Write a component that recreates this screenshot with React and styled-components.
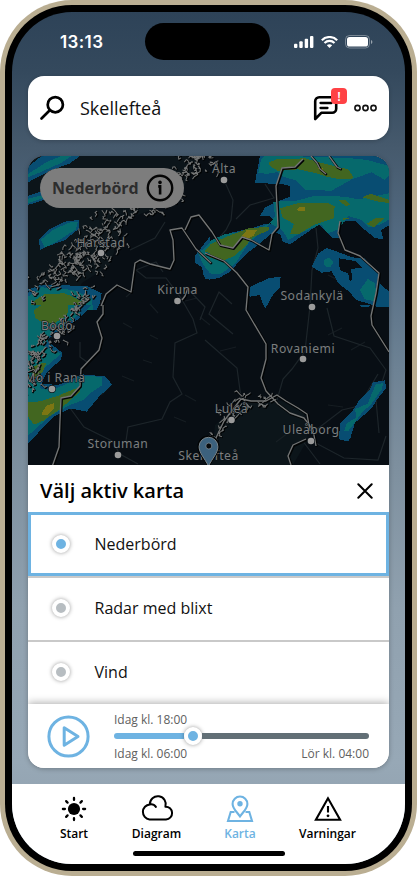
import React from "react";
import styled, { createGlobalStyle, css } from "styled-components";

const Global = createGlobalStyle`
  * { box-sizing: border-box; }
  body { margin: 0; background: #fff; font-family: "Open Sans", "Noto Sans", sans-serif; color: #111; }
  button { font: inherit; color: inherit; background: none; border: 0; padding: 0; }
  svg { display: block; }
`;

const Phone = styled.div`
  width: 417px;
  height: 876px;
  padding: 5px;
  border-radius: 72px;
  background: #baae92;
  overflow: hidden;
`;
const Bezel = styled.div`
  height: 100%;
  padding: 7px;
  border-radius: 67px;
  background: #000;
`;
const Screen = styled.div`
  height: 100%;
  display: flex;
  flex-direction: column;
  border-radius: 60px;
  overflow: hidden;
  background: linear-gradient(#2e4358 0%, #34495d 7%, #465a6d 16%, #536b82 27%, #6d8294 42%, #7d8f9e 53%, #90a1af 70%, #97a8b6 88%, #8d9daa 100%);
`;
const StatusBar = styled.header`
  flex: none;
  height: 64px;
  display: grid;
  grid-template-columns: 133px 125px 135px;
  padding-top: 11px;
`;
const Clock = styled.time`
  padding-left: 48px;
  font: 600 17px/38px Inter, sans-serif;
  letter-spacing: 0.4px;
  color: #fff;
`;
const Island = styled.div`
  height: 37px;
  border-radius: 19px;
  background: #000;
`;
const StatusIcons = styled.div`
  display: flex;
  align-items: center;
  gap: 7px;
  height: 37px;
  padding-left: 24px;
`;
const SearchBar = styled.div`
  flex: none;
  height: 64px;
  margin: 0 16px;
  padding: 0 12px 0 11px;
  display: flex;
  align-items: center;
  border-radius: 16px;
  background: #fff;
  box-shadow: 0 1px 4px #0003;
`;
const Place = styled.span`
  flex: 1;
  margin-left: 15px;
  font-size: 18px;
  line-height: 24px;
`;
const MessageButton = styled.button`
  position: relative;
  margin-right: 15px;
`;
const Badge = styled.span`
  position: absolute;
  top: -7px;
  right: -8px;
  width: 16px;
  height: 16px;
  border-radius: 4px;
  background: #ff4245;
  color: #fff;
  font-size: 13px;
  font-weight: 600;
  line-height: 16px;
  text-align: center;
`;
const Card = styled.main`
  flex: none;
  height: 612px;
  margin: 16px 16px;
  display: flex;
  flex-direction: column;
  border-radius: 16px;
  overflow: hidden;
  background: #fff;
  box-shadow: 0 1px 5px #0004;
`;
const MapArea = styled.div`
  flex: none;
  position: relative;
  height: 309px;
`;
const LayerPill = styled.button`
  position: absolute;
  left: 12px;
  top: 12px;
  display: flex;
  align-items: center;
  justify-content: space-between;
  width: 144px;
  height: 40px;
  padding: 0 10px 0 12px;
  border-radius: 20px;
  background: #7d7d7d;
  color: #2d2d2d;
  font-size: 16px;
  font-weight: 700;
`;
const SheetHeader = styled.div`
  flex: none;
  display: flex;
  align-items: center;
  justify-content: space-between;
  height: 47px;
  padding: 4px 16px 0 12px;
`;
const SheetTitle = styled.h2`
  margin: 0;
  font-size: 20px;
  font-weight: 600;
  line-height: 28px;
  color: #000;
`;
const Option = styled.div`
  flex: none;
  display: flex;
  align-items: center;
  height: 64px;
  padding: 0 20px;
  border-bottom: ${(p) => (p.$last ? 0 : 2)}px solid #c9c9c9;
  font-size: 16px;
  ${(p) =>
    p.$active &&
    css`
      border: 3px solid #6eb3e2;
      padding: 0 17px;
    `}
  ${(p) => p.$middle && css`border-top: 2px solid #c9c9c9; height: 66px; padding-bottom: 2px;`}
  ${(p) => p.$last && css`height: 62px; padding-bottom: 2px;`}
`;
const OptionLabel = styled.span`
  margin-left: 20.5px;
`;
const Knob = styled.span`
  flex: none;
  width: ${(p) => p.$size || 18}px;
  height: ${(p) => p.$size || 18}px;
  margin: ${(p) => (p.$size ? 0 : "0 4px")};
  border: 4px solid #fff;
  border-radius: 50%;
  background: ${(p) => (p.$on ? "#6eb3e2" : "#b7bdc1")};
  box-shadow: 0 0 4px #0006;
`;
const Player = styled.div`
  flex: none;
  display: flex;
  align-items: center;
  height: 64px;
  padding: 0 20px 0 19px;
  background: #fff;
  box-shadow: 0 -1px 8px #0005;
`;
const Timeline = styled.div`
  flex: 1;
  margin-left: 24px;
  display: flex;
  flex-direction: column;
  font-size: 12px;
  line-height: 16px;
  color: #606060;
`;
const CurrentTime = styled.span`
  padding-top: 2px;
`;
const Track = styled.div`
  display: flex;
  align-items: center;
  height: 16px;
`;
const Played = styled.div`
  width: 70px;
  height: 6px;
  border-radius: 3px 0 0 3px;
  background: #6eb3e2;
`;
const Remaining = styled.div`
  flex: 1;
  height: 6px;
  border-radius: 0 3px 3px 0;
  background: #626f76;
`;
const TimeRange = styled.div`
  display: flex;
  justify-content: space-between;
  padding-top: 2px;
`;
const Footer = styled.footer`
  flex: none;
  height: 80px;
  background: #fff;
`;
const Nav = styled.nav`
  display: grid;
  grid-template-columns: 74px 91px 76px 99px;
  justify-content: start;
  height: 67px;
  padding: 10px 0 0 25px;
`;
const NavItem = styled.button`
  display: flex;
  flex-direction: column;
  align-items: center;
  gap: 1px;
  font-size: 12px;
  font-weight: 600;
  line-height: 18px;
  color: ${(p) => (p.$active ? "#6eb3e2" : "#000")};
`;
const HomeIndicator = styled.div`
  width: 152px;
  height: 5px;
  margin: 0 auto;
  border-radius: 3px;
  background: #000;
`;

const SearchIcon = () => (
  <svg width="26" height="26" viewBox="0 0 26 26" fill="none" stroke="#000" strokeWidth="2.7" strokeLinecap="round">
    <circle cx="16.3" cy="9.7" r="7.6" /><path d="M10.8 15.2 2.5 23.5" />
  </svg>
);
const MessageIcon = () => (
  <svg width="26" height="26" viewBox="0 0 26 26" fill="none" stroke="#000" strokeWidth="2.6" strokeLinecap="round" strokeLinejoin="round">
    <path d="M2.2 24V6.2a4 4 0 0 1 4-4h17v11.6a4 4 0 0 1-4 4H8.3z" /><path d="M7.5 8h11M7.5 13h7" strokeWidth="2.3" />
  </svg>
);
const MoreIcon = () => (
  <svg width="23" height="8" viewBox="0 0 23 8" fill="none" stroke="#111" strokeWidth="1.6">
    {[3.5, 11.5, 19.5].map((x) => <circle key={x} cx={x} cy="4" r="2.6" />)}
  </svg>
);
const Signal = () => (
  <svg width="20" height="12" fill="#fff">
    <rect y="7.8" width="3.4" height="4.2" rx="1" /><rect x="5.3" y="5.2" width="3.4" height="6.8" rx="1" />
    <rect x="10.7" y="2.7" width="3.4" height="9.3" rx="1" /><rect x="16" width="3.4" height="12" rx="1" />
  </svg>
);
const Wifi = () => (
  <svg width="17" height="12" viewBox="0 0 17 12" fill="none" stroke="#fff" strokeWidth="2.1">
    <path d="M.8 4.2C5-.1 12-.1 16.2 4.2M3.5 7c2.8-2.9 7.2-2.9 10 0" /><path d="m8.5 12-2.7-2.8c1.5-1.4 3.9-1.4 5.4 0z" fill="#fff" stroke="none" />
  </svg>
);
const Battery = () => (
  <svg width="28" height="14" viewBox="0 0 28 14">
    <rect x=".5" y=".5" width="24" height="12.5" rx="4" fill="none" stroke="#fff" opacity=".35" />
    <rect x="2" y="2" width="21" height="9.5" rx="2.6" fill="#fff" /><path d="M26 5v4q1.4-.7 1.4-2T26 5" fill="#fff" opacity=".5" />
  </svg>
);
const InfoIcon = () => (
  <svg width="28" height="28" viewBox="0 0 28 28" fill="none" stroke="#050505">
    <circle cx="14" cy="14" r="12.2" strokeWidth="2.4" /><path d="M12.2 12.4h1.9v8" strokeWidth="2.6" /><circle cx="14" cy="8.4" r="1.8" fill="#050505" stroke="none" />
  </svg>
);
const CloseIcon = () => (
  <svg width="16" height="16" stroke="#000" strokeWidth="2" strokeLinecap="round"><path d="m1.3 1.3 13.4 13.4m0-13.4L1.3 14.7" /></svg>
);
const PlayIcon = () => (
  <svg width="43" height="43" viewBox="0 0 43 43" fill="none" stroke="#6eb3e2" strokeWidth="3" strokeLinejoin="round">
    <circle cx="21.5" cy="21.5" r="19.6" /><path d="M17.2 12.8v17.4L31 21.5z" />
  </svg>
);
const SunIcon = () => (
  <svg width="30" height="30" viewBox="-15 -15 30 30" stroke="#000" strokeWidth="2.3" strokeLinecap="round">
    <circle r="6.1" stroke="none" />
    {[0, 45, 90, 135, 180, 225, 270, 315].map((a) => <path key={a} d="M0-9.1v-2" transform={`rotate(${a})`} />)}
  </svg>
);
const CloudIcon = () => (
  <svg width="34" height="30" viewBox="0 0 34 30" fill="none" stroke="#000" strokeWidth="2" strokeLinecap="round" strokeLinejoin="round">
    <path d="M9.8 10.4a7.6 7.6 0 0 0-.3 15.1H26a6.4 6.4 0 0 0-.6-12.8 8 8 0 1 0-15.6-2.3c2.8-.5 4.8.5 6.1 2.5" />
  </svg>
);
const MapIcon = () => (
  <svg width="30" height="30" viewBox="0 0 30 30" fill="none" stroke="currentColor" strokeWidth="2.1">
    <path d="M15 22.5C11.6 17.5 7.6 14.4 7.6 9.9a7.4 7.4 0 0 1 14.8 0c0 4.5-4 7.6-7.4 12.6z" /><circle cx="15" cy="9.8" r="2.7" fill="currentColor" stroke="none" /><path d="M9.5 18H5.7L3 27h24l-2.7-9h-3.8" />
  </svg>
);
const WarningIcon = () => (
  <svg width="30" height="30" viewBox="0 0 30 30" fill="none" stroke="#000" strokeWidth="2.1"><path d="M15 4.3 2.9 25.8h24.2z" /><path d="M15 12v6.5" /><circle cx="15" cy="21.8" r="1.4" fill="#000" stroke="none" /></svg>
);

const blue = "#084d72";
const teal = "#06696c";
const green = "#426620";
const yellow = "#7d7613";

// Small deterministic generator for the broken shapes of the archipelago.
const skerries = (points, count, spread, seed) => {
  let s = seed;
  const rand = () => ((s = (s * 16807) % 2147483647) / 2147483647) - 0.5;
  let d = "";
  for (let i = 0; i < count; i++) {
    const t = (i / count) * (points.length - 1);
    const k = Math.floor(t);
    const a = points[k];
    const b = points[k + 1];
    const x = a[0] + (b[0] - a[0]) * (t - k) + rand() * spread;
    const y = a[1] + (b[1] - a[1]) * (t - k) + rand() * spread;
    d += `M${x.toFixed(1)} ${y.toFixed(1)}l${(rand() * 6).toFixed(1)} ${(rand() * 6).toFixed(1)} ${(rand() * 7).toFixed(1)} ${(rand() * 7).toFixed(1)} ${(rand() * 5).toFixed(1)} ${(rand() * 6).toFixed(1)}`;
  }
  return d;
};
const fjords = [
  skerries([[30, 292], [65, 270], [90, 236], [122, 212], [165, 200], [185, 167], [212, 160]], 250, 23, 71),
  skerries([[64, 266], [90, 262], [124, 240]], 65, 22, 19),
  skerries([[30, 390], [38, 352], [62, 325], [90, 290]], 110, 17, 37),
];
const gulf = skerries([[211, 444], [226, 414], [242, 400], [272, 402]], 46, 13, 88);

const cities = [
  ["Alta", 224, 173, 180], ["Harstad", 101, 247, 253], ["Kiruna", 177.5, 294, 301],
  ["Sodankylä", 312, 300, 307], ["Bodö", 57, 330, 336], ["Rovaniemi", 303, 353, 359],
  ["Mo i Rana", 54.8, 382, 389], ["Luleå", 231.5, 413, 420], ["Uleåborg", 311, 434, 441],
  ["Storuman", 118, 448, 455], ["Skellefteå", 208.5, 460, null],
];

const WeatherMap = () => (
  <svg width="361" height="309" viewBox="28 156 361 309">
    <rect x="28" y="156" width="361" height="309" fill="#080e14" />
    <path d="M28 156h170l-20 44-54 20-14 45-28 18-18 38-36 55zM211 465l4-40 25-22 42-2 22 12 4 26-15 26z" fill="#0c151a" />
    {/* Rivers and roads */}
    <g fill="none" stroke="#1d252a" strokeWidth="1.2">
      <path d="M224 180l9 20-2 20-5 10-22 25M136 270l10 8 20 0 15 20 12 21 4 14-22 10-2 34 9 17-12 8-8 17-34 8-2 14M205 340l32 28 4 30M80 342v15l7 5M70 408l14 19 28 14 8 13 18 10M316 228l2 20-6 22-2 36-5 45-13 18-9 10-6 21M327 308l7 28 36 12 16 22-10 30 3 33M312 433l30-23 17-4 19-32M312 441l32 17 34 2 8-24M232 304l-13-12-10 22 24 20M136 270l20-8 7 10M130 250l25-12 10-16M265 184l9 14-24 7-14 14M200 320l5-13-18-19M302 440l18 24" />
      <path d="M134 290l-8 7m24 7 8 9m-35 10 9 5m18 7 8 4m-15 21 9 3m-30 13 12 5m-24 5-9 9m84 0 11 6m-22 16 12 5m14-105 10 8m-13-27-12 3m35 50 16-4m92-72 12 6m-12 54 14-7m9 22 14-8m-37 63 15 2m-67 35 12-9" opacity=".65" />
    </g>
    {/* Northern and eastern precipitation */}
    <g transform="translate(205 150) scale(.33333)" shapeRendering="crispEdges">
      <path fill={blue} d="M165 18 150 98 245 104 255 110V140L210 158 180 172 165 198H195L212 220 180 222 150 232 80 248 0 280V388L40 385 75 365 120 315 165 280 205 246 225 252 234 276 255 283 320 238 342 225 365 245 380 263H401V245L411 215 450 213 480 240 510 264 535 268 528 240 552 226V40L515 18z" />
      <path fill={teal} d="M168 30 160 68 185 72 217 66 235 80 275 92 300 120 380 122 440 88 500 67 540 90 552 75V48L487 30 440 25 330 20 180 18zM205 155 275 152 330 137 420 140 460 148 552 130 552 208 530 222 490 232 470 210 430 198 400 238 368 251 348 223 285 250 250 270 234 243 196 220 170 244 130 280 90 342 45 373H20L0 348V280L60 252 155 240 193 220 210 200z" />
      <path fill={green} d="M190 38 215 28 300 25 385 48 430 58 447 85 405 88 365 80 335 70 280 58 220 63 198 51zM225 175 285 158 370 160 389 168 386 205 330 223 280 253H255L267 222 232 202zM0 291 60 262 130 235 193 230 190 241 142 263 120 290 88 318 60 330 5 323zM473 142 496 131 552 149 552 159 515 154zM485 222 510 205 540 203 507 232zM400 150h20l16 15-15 3zM415 205h20l-20 5z" />
      <path fill={yellow} d="M275 178 284 171h17v13h-20zM109 258 125 241h30l-10 17-22 10zM335 53h16l16 22-6-4z" />
      <path fill={blue} d="M130 413 190 385 227 380 224 412 200 440 181 476 171 456 165 435 134 440zM320 350 340 310 365 294 410 310 440 322 480 325 524 370 524 400 552 425V472H520L503 465 455 450 430 423 400 400 380 364 350 368zM402 325 404 360 430 371 434 393 442 390 438 357 470 353 450 333z" fillRule="evenodd" />
      <path fill={teal} d="M357 331 373 322 385 337 375 352 359 349zM464 420 480 400 488 387 510 400 514 435 506 453 480 448z" />
    </g>
    {/* Northwestern precipitation */}
    <g transform="translate(20 150) scale(.33333)" shapeRendering="crispEdges">
      <path fill={blue} d="M24 50 65 18H180L150 40 90 62 24 97zM24 138 60 126 105 130 70 150 24 165zM57 270 90 237 135 215 176 210 178 235 135 270 80 290 60 300zM526 315 570 260V390L552 380 545 350 526 340zM24 419 65 404 200 408 245 430 240 460 230 480H24z" />
      <path fill={teal} d="M24 72 80 36 125 18H155L125 38 65 65 24 82zM24 146 60 137 90 138 24 160zM62 270 100 239 150 217 174 215 168 238 110 275 75 292zM535 310 570 278V370L550 345zM24 440 65 412 160 420 214 445 220 480H24z" />
      <path fill={green} d="M24 478 40 454 75 432 135 430 192 457 190 480zM554 304 570 288v22z" />
    </g>
    <g transform="translate(20 305) scale(.33333)" shapeRendering="crispEdges">
      <path fill={blue} d="M24 0H215L175 43 125 73 80 105 127 144 123 164 80 202 65 236 115 240 185 208 255 214 277 239 240 272 200 320 173 314 150 311 100 336 60 378 24 415z" />
      <path fill={teal} d="M24 0H170L180 25 132 68 94 80 75 125 124 146 90 175 62 198 60 250 95 256 155 230 187 211 245 216 247 240 210 265 190 285 150 300 90 333 24 392z" />
      <path fill={green} d="M42 15 65 0H145L142 31 105 54H68L45 38zM35 188 65 174H80L65 205 35 225zM24 292 60 289 115 272 175 247 180 260 120 313 70 347 42 359 24 335z" />
      <path fill={yellow} d="M65 325 80 302 102 295V311L82 331H67z" />
    </g>
    <g transform="translate(205 305) scale(.33333)" shapeRendering="crispEdges">
      <path fill={blue} d="M402 403 405 357 445 314 465 282 495 254 504 232 540 226 543 250 515 285 500 310 475 332 450 353 437 397 430 410zM465 0h33l-8 7h-20z" />
      <path fill={teal} d="M418 377 424 356 455 337 450 312 488 296 500 266 513 238 535 234 530 253 500 296 470 324 444 360 430 378z" />
    </g>
    {/* Borders and coasts: a dark edge offset down and right, then the light line */}
    {[["#020405", 2.4, 0.8], ["#737575", 1.35, 0]].map(([stroke, width, offset]) => (
      <g key={stroke} fill="none" stroke={stroke} strokeWidth={width} strokeLinejoin="round" transform={`translate(${offset} ${offset})`}>
        <path d="M101 306l5-12 11-9 14 7 4-29 5-3 10 4 20 5 4-9-1-20-3-10 12-2 14 21 15 14M185 230l6-13 8-2 13 17 8 13 13 3 9-11 9 3 18 10 3-16 6-7-2-41 6-18 13-1 8-8M311 156l6 7 3 6 6 5M329 156l8 11 4 2M205 253l19 8 13 12 11 14-2 23 7 12 13 22 0 15-5 19 5 13 12 13 12 9 14 5 9 12 3 16" />
        <path d="M340 221l-2 12 7 17 15 6 19 17-3 20-5 23 1 9 17 27M103 305v9l-6 8 5 16-3 12-18 19-1 17-9 10-10 2-1 22-1 27-7 20" />
        <path d="M208 465l7-25 9-19 17-22 10 2 15 0 11-6 9 6 12 7 9 6 3 17M306 439l-13 6-5 11 3 9M188 288l-3 8-3 4" />
        <g strokeWidth={width * 0.75}>{fjords.map((d, i) => <path key={i} d={d} />)}<path d={gulf} /></g>
      </g>
    ))}
    <g fill="#7b7e7f" fontSize="12.2" textAnchor="middle" letterSpacing=".5" fontFamily='"Noto Sans", sans-serif' stroke="#0a1116" strokeWidth="1.2" paintOrder="stroke">
      {cities.map(([name, x, y, dot]) => (
        <React.Fragment key={name}><text x={x} y={y}>{name}</text>{dot && <circle cx={name === "Mo i Rana" ? 52 : x} cy={dot} r="3.3" fill="#9b9b9b" />}</React.Fragment>
      ))}
    </g>
    <path d="M208.5 466c-4-8-9.9-13-9.9-19.3a9.9 9.9 0 0 1 19.8 0c0 6.3-5.9 11.3-9.9 19.3z" fill="#3c617d" stroke="#020405" strokeWidth="2.4" />
    <path d="M208.5 466c-4-8-9.4-13-9.4-19.3a9.4 9.4 0 0 1 18.8 0c0 6.3-5.4 11.3-9.4 19.3z" fill="#3c617d" stroke="#7a848a" strokeWidth="1" />
    <circle cx="208.8" cy="446" r="3" fill="#05090c" stroke="#8b979f" strokeWidth=".7" />
  </svg>
);

export default function App() {
  return (
    <>
      <Global />
      <Phone>
        <Bezel>
          <Screen>
            <StatusBar>
              <Clock>13:13</Clock>
              <Island />
              <StatusIcons><Signal /><Wifi /><Battery /></StatusIcons>
            </StatusBar>
            <SearchBar>
              <SearchIcon />
              <Place>Skellefteå</Place>
              <MessageButton><MessageIcon /><Badge>!</Badge></MessageButton>
              <MoreIcon />
            </SearchBar>
            <Card>
              <MapArea>
                <WeatherMap />
                <LayerPill>Nederbörd<InfoIcon /></LayerPill>
              </MapArea>
              <SheetHeader><SheetTitle>Välj aktiv karta</SheetTitle><CloseIcon /></SheetHeader>
              <Option $active><Knob $on /><OptionLabel>Nederbörd</OptionLabel></Option>
              <Option $middle><Knob /><OptionLabel>Radar med blixt</OptionLabel></Option>
              <Option $last><Knob /><OptionLabel>Vind</OptionLabel></Option>
              <Player>
                <PlayIcon />
                <Timeline>
                  <CurrentTime>Idag kl. 18:00</CurrentTime>
                  <Track><Played /><Knob $on $size={18} /><Remaining /></Track>
                  <TimeRange><span>Idag kl. 06:00</span><span>Lör kl. 04:00</span></TimeRange>
                </Timeline>
              </Player>
            </Card>
            <Footer>
              <Nav>
                <NavItem><SunIcon />Start</NavItem>
                <NavItem><CloudIcon />Diagram</NavItem>
                <NavItem $active><MapIcon />Karta</NavItem>
                <NavItem><WarningIcon />Varningar</NavItem>
              </Nav>
              <HomeIndicator />
            </Footer>
          </Screen>
        </Bezel>
      </Phone>
    </>
  );
}
